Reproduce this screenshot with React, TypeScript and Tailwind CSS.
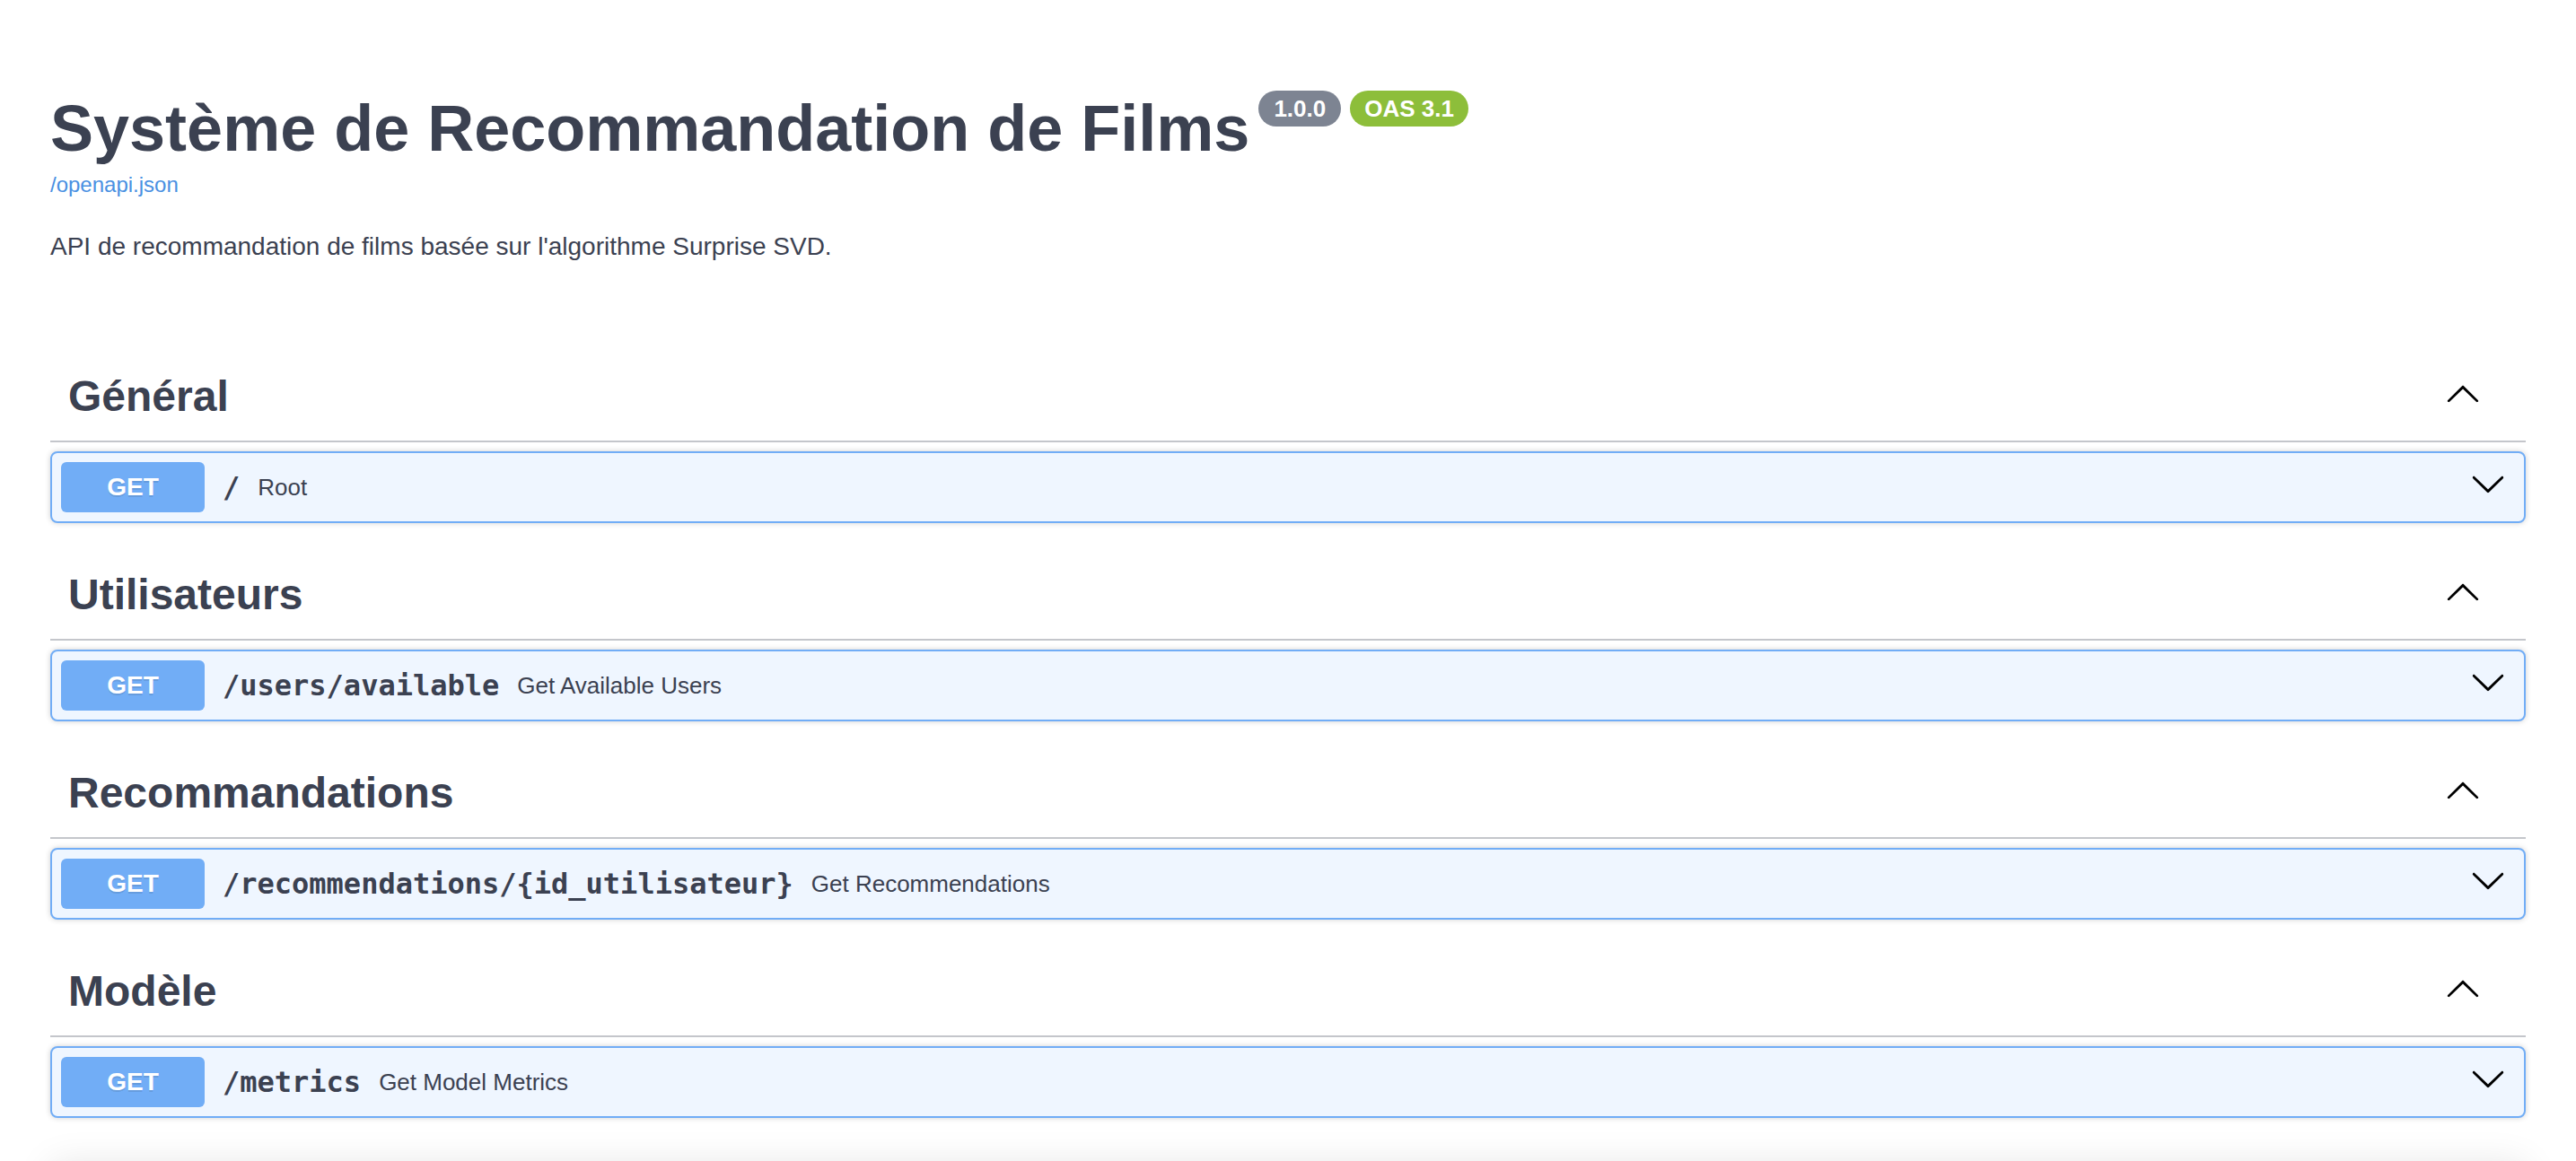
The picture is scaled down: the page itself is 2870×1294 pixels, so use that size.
import React from "react";

interface Endpoint {
  tag: string;
  path: string;
  summary: string;
}

const endpoints: Endpoint[] = [
  { tag: "Général", path: "/", summary: "Root" },
  { tag: "Utilisateurs", path: "/users/available", summary: "Get Available Users" },
  { tag: "Recommandations", path: "/recommendations/{id_utilisateur}", summary: "Get Recommendations" },
  { tag: "Modèle", path: "/metrics", summary: "Get Model Metrics" },
];

const ArrowUp = () => (
  <svg className="w-[40px] h-[40px] mb-[8px] shrink-0" viewBox="0 0 20 20" fill="#000">
    <path d="M17.418 14.908c.272.268.709.268.979 0s.271-.701 0-.969l-7.908-7.83c-.27-.268-.707-.268-.979 0l-7.908 7.83c-.27.268-.27.701 0 .969.271.268.709.268.979 0L10 7.767l7.418 7.141z" />
  </svg>
);

const ArrowDown = () => (
  <svg className="w-[40px] h-[40px] mb-[8px] shrink-0" viewBox="0 0 20 20" fill="#000">
    <path d="M17.418 6.109c.272-.268.709-.268.979 0s.271.701 0 .969l-7.908 7.83c-.27.268-.707.268-.979 0l-7.908-7.83c-.27-.268-.27-.701 0-.969.271-.268.709-.268.979 0L10 13.25l7.418-7.141z" />
  </svg>
);

const App: React.FC = () => {
  return (
    <div className="min-h-screen bg-white font-['Liberation_Sans',Arial,sans-serif] text-[#3b4151] overflow-hidden">
      <div className="px-[56px] pt-[103px]">
        {/* info */}
        <div className="flex items-start">
          <h1 className="text-[72px] leading-[80px] font-bold">Système de Recommandation de Films</h1>
          <span className="ml-[10px] mt-[-2px] h-[40px] px-[17px] rounded-full bg-[#7d8492] text-white text-[26px] font-bold leading-[40px]">
            1.0.0
          </span>
          <span className="ml-[10px] mt-[-2px] h-[40px] px-[16px] rounded-full bg-[#8dbe3a] text-white text-[26px] font-bold leading-[40px]">
            OAS 3.1
          </span>
        </div>
        <a className="block w-fit mt-[9px] text-[24px] leading-[28px] text-[#4990e2]">/openapi.json</a>
        <p className="mt-[39px] text-[28px] leading-[32px]">
          API de recommandation de films basée sur l'algorithme Surprise SVD.
        </p>

        {/* operations */}
        <div className="mt-[102px]">
          {endpoints.map((ep) => (
            <div key={ep.tag} className="flex flex-col">
              <div className="flex items-center h-[100px] pl-[20px] pr-[50px] border-b-2 border-[#c4c6cb]">
                <h3 className="flex-1 text-[48px] leading-[56px] font-bold">{ep.tag}</h3>
                <ArrowUp />
              </div>
              <div className="mt-[10px] mb-[31px] flex items-center p-[10px] pr-[20px] border-2 border-[#71adf6] rounded-[8px] bg-[#eff6ff] shadow-[0_0_6px_rgba(0,0,0,0.19)]">
                <span className="w-[160px] h-[56px] shrink-0 rounded-[6px] bg-[#71adf6] text-white text-[28px] font-bold flex items-center justify-center [text-shadow:0_2px_0_rgba(0,0,0,0.1)]">
                  GET
                </span>
                <span className="px-[20px] font-['DejaVu_Sans_Mono',monospace] text-[32px] font-bold whitespace-nowrap">
                  {ep.path}
                </span>
                <span className="flex-1 text-[26px]">{ep.summary}</span>
                <ArrowDown />
              </div>
            </div>
          ))}
        </div>

        {/* models section, mostly below the fold */}
        <div className="mt-[20px] h-[200px] rounded-[8px] shadow-[0_0_40px_rgba(0,0,0,0.1)]" />
      </div>
    </div>
  );
};

export default App;
